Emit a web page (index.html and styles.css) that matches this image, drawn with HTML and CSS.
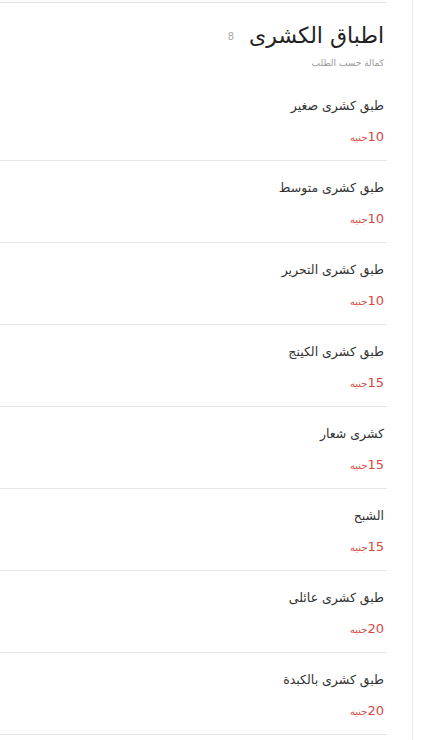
FILE: index.html
```html
<!DOCTYPE html>
<html lang="ar" dir="rtl">
<head>
<meta charset="utf-8">
<link rel="stylesheet" href="styles.css">
</head>
<body>
<div class="page">
  <aside class="side"></aside>
  <main class="menu">
    <header class="cat">
      <h1 class="cat-title">اطباق الكشرى <span class="count">8</span></h1>
      <p class="cat-sub">كمالة حسب الطلب</p>
    </header>
    <ul class="items">
      <li class="item"><div class="name">طبق كشرى صغير</div><div class="price"><span class="num">10</span><span class="cur">جنيه</span></div></li>
      <li class="item"><div class="name">طبق كشرى متوسط</div><div class="price"><span class="num">10</span><span class="cur">جنيه</span></div></li>
      <li class="item"><div class="name">طبق كشرى التحرير</div><div class="price"><span class="num">10</span><span class="cur">جنيه</span></div></li>
      <li class="item"><div class="name">طبق كشرى الكينج</div><div class="price"><span class="num">15</span><span class="cur">جنيه</span></div></li>
      <li class="item"><div class="name">كشرى شعار</div><div class="price"><span class="num">15</span><span class="cur">جنيه</span></div></li>
      <li class="item"><div class="name">الشبح</div><div class="price"><span class="num">15</span><span class="cur">جنيه</span></div></li>
      <li class="item"><div class="name">طبق كشرى عائلى</div><div class="price"><span class="num">20</span><span class="cur">جنيه</span></div></li>
      <li class="item"><div class="name">طبق كشرى بالكبدة</div><div class="price"><span class="num">20</span><span class="cur">جنيه</span></div></li>
    </ul>
  </main>
</div>
</body>
</html>
```
FILE: styles.css
```css
html, body {
  margin: 0;
  padding: 0;
  background: #fff;
  font-family: "DejaVu Sans", "Noto Sans", sans-serif;
  color: #333;
  overflow: hidden;
}
.page {
  display: flex;
  direction: rtl;
  height: 740px;
}
.side {
  width: 12px;
  border-left: 1px solid #ececec;
  flex: none;
}
.menu {
  width: 387px;
  margin-right: 25px;
  flex: none;
  padding-top: 2px;
}
.cat {
  border-top: 1px solid #e2e2e2;
  height: 77px;
  box-sizing: border-box;
  padding: 17px 3px 0 0;
}
.cat-title {
  margin: 0;
  font-size: 22px;
  font-weight: normal;
  color: #222;
  line-height: 32px;
}
.count {
  font-size: 10px;
  color: #aaa;
  margin-right: 8px;
  vertical-align: middle;
}
.cat-sub {
  margin: 4px 0 0 0;
  font-size: 9px;
  color: #999;
  line-height: 12px;
}
.items {
  list-style: none;
  margin: 0;
  padding: 0;
}
.item {
  height: 82px;
  box-sizing: border-box;
  border-bottom: 1px solid #e6e6e6;
  padding: 17px 3px 0 0;
}
.name {
  font-size: 12.5px;
  line-height: 20px;
  color: #333;
}
.price {
  margin-top: 10px;
  line-height: 20px;
  color: #d6483f;
}
.num {
  font-size: 13px;
}
.cur {
  font-size: 10px;
}
```
